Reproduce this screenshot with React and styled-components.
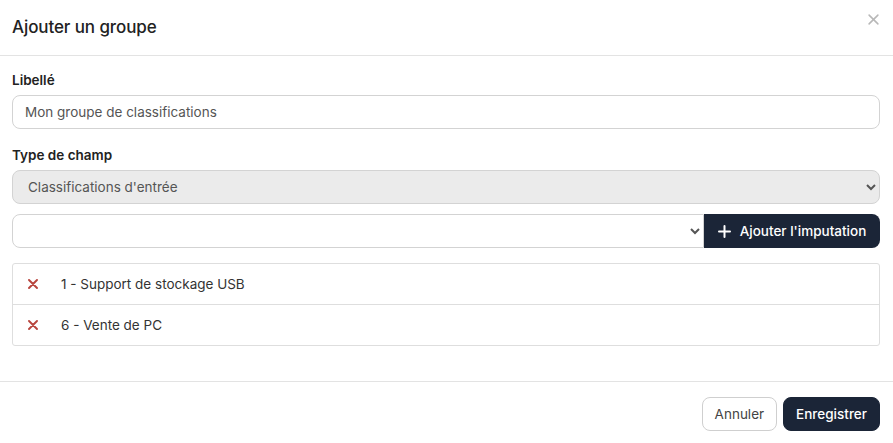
import React from "react";
import styled, { createGlobalStyle } from "styled-components";

const Global = createGlobalStyle`
  html, body { margin: 0; padding: 0; background: #fff; }
  body { font-family: Inter, "Noto Sans", sans-serif; color: #212529; }
  * { box-sizing: border-box; }
`;

const Modal = styled.div`
  width: 893px;
  height: 443px;
  display: flex;
  flex-direction: column;
  background: #fff;
`;

const Header = styled.div`
  height: 56px;
  display: flex;
  align-items: center;
  justify-content: space-between;
  padding: 0 14px 2px 12px;
  border-bottom: 1px solid #e3e3e3;
`;

const Title = styled.h5`
  margin: 0;
  font-size: 17px;
  font-weight: 500;
  color: #222;
  letter-spacing: -0.1px;
`;

const Close = styled.button`
  border: 0;
  background: none;
  padding: 0;
  margin-top: -14px;
  display: flex;
  cursor: pointer;
`;

const Body = styled.div`
  flex: 1;
  padding: 16px 13px 0 12px;
  display: flex;
  flex-direction: column;
`;

const Label = styled.label`
  font-size: 13.5px;
  font-weight: 600;
  color: #222;
  margin-bottom: 7px;
  display: block;
`;

const Field = styled.div`
  margin-bottom: ${(p) => p.$mb || 0}px;
`;

const Input = styled.input`
  width: 100%;
  height: 34px;
  border: 1px solid #d3d3d3;
  border-radius: 8px;
  padding: 0 12px;
  font-family: inherit;
  font-size: 13.5px;
  color: #555;
  background: #fff;
  outline: none;
`;

const Select = styled.select`
  width: 100%;
  height: 34px;
  border: 1px solid #d3d3d3;
  border-radius: ${(p) => p.$radius || "8px"};
  padding: 0 12px 0 11px;
  font-family: inherit;
  font-size: 13.5px;
  color: #555;
  background: ${(p) => (p.disabled ? "#ebebeb" : "#fff")};
  opacity: 1;
`;

const InputGroup = styled.div`
  display: flex;
  height: 34px;
  margin-top: 10px;
`;

const AddButton = styled.button`
  flex: 0 0 176px;
  border: 0;
  background: #1b2537;
  color: #fff;
  border-radius: 0 8px 8px 0;
  font-family: inherit;
  font-size: 13.5px;
  font-weight: 500;
  display: flex;
  align-items: center;
  justify-content: center;
  gap: 9px;
  padding: 0;
`;

const List = styled.ul`
  list-style: none;
  margin: 15px 0 0;
  padding: 0;
  border: 1px solid #dedede;
  border-radius: 3px;
`;

const Item = styled.li`
  height: 40px;
  display: flex;
  align-items: center;
  padding-left: 15px;
  font-size: 13.5px;
  color: #333;
  & + & { border-top: 1px solid #dedede; height: 41px; }
`;

const Remove = styled.span`
  width: 33px;
  display: flex;
  align-items: center;
`;

const Footer = styled.div`
  height: 62px;
  border-top: 1px solid #e3e3e3;
  display: flex;
  align-items: center;
  justify-content: flex-end;
  gap: 6px;
  padding: 3px 13px 0 0;
`;

const Btn = styled.button`
  height: 34px;
  border-radius: 8px;
  font-family: inherit;
  font-size: 13.5px;
  padding: 0 12px;
  border: 1px solid ${(p) => (p.$primary ? "#1b2537" : "#cfcfcf")};
  background: ${(p) => (p.$primary ? "#1b2537" : "#fff")};
  color: ${(p) => (p.$primary ? "#fff" : "#444")};
  font-weight: ${(p) => (p.$primary ? 500 : 400)};
`;

const Cross = ({ size, color, width }) => (
  <svg width={size} height={size} viewBox="0 0 10 10">
    <path d="M1 1l8 8M9 1l-8 8" stroke={color} strokeWidth={width} strokeLinecap="round" />
  </svg>
);

export default function App() {
  return (
    <>
      <Global />
      <Modal>
        <Header>
          <Title>Ajouter un groupe</Title>
          <Close aria-label="Fermer">
            <Cross size={11} color="#b8b8b8" width={1.4} />
          </Close>
        </Header>
        <Body>
          <Field $mb={18}>
            <Label>Libellé</Label>
            <Input defaultValue="Mon groupe de classifications" />
          </Field>
          <Field>
            <Label>Type de champ</Label>
            <Select disabled defaultValue="in">
              <option value="in">Classifications d'entrée</option>
            </Select>
          </Field>
          <InputGroup>
            <Select $radius="8px 0 0 8px" defaultValue="">
              <option value=""></option>
            </Select>
            <AddButton>
              <svg width="13" height="13" viewBox="0 0 13 13">
                <path d="M6.5 1v11M1 6.5h11" stroke="#fff" strokeWidth="2" strokeLinecap="round" />
              </svg>
              Ajouter l'imputation
            </AddButton>
          </InputGroup>
          <List>
            <Item>
              <Remove><Cross size={10} color="#b8453e" width={1.9} /></Remove>1 - Support de stockage USB
            </Item>
            <Item>
              <Remove><Cross size={10} color="#b8453e" width={1.9} /></Remove>6 - Vente de PC
            </Item>
          </List>
        </Body>
        <Footer>
          <Btn>Annuler</Btn>
          <Btn $primary>Enregistrer</Btn>
        </Footer>
      </Modal>
    </>
  );
}
